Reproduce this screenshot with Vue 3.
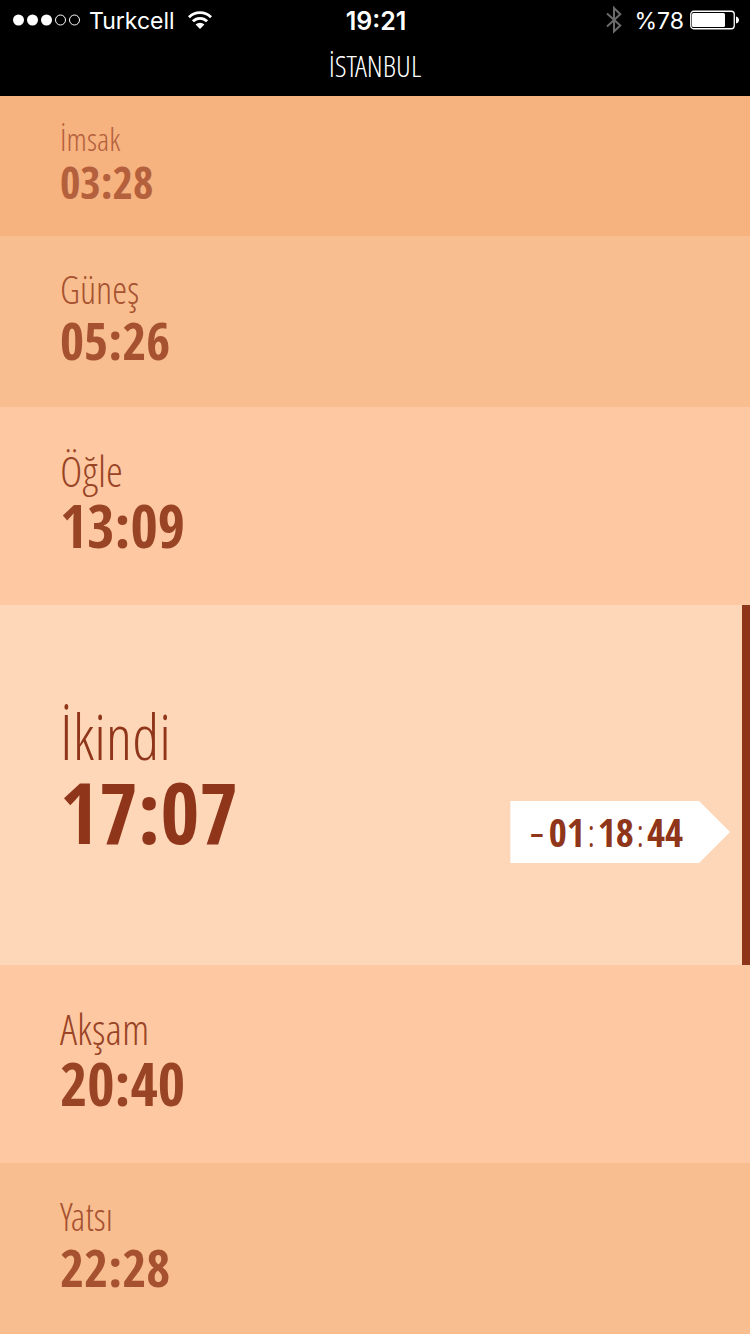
<script setup>
const prayers = [
  { name: 'İmsak', time: '03:28', tier: 'far' },
  { name: 'Güneş', time: '05:26', tier: 'mid' },
  { name: 'Öğle', time: '13:09', tier: 'near' },
  { name: 'İkindi', time: '17:07', tier: 'current', remaining: ['01', '18', '44'] },
  { name: 'Akşam', time: '20:40', tier: 'near' },
  { name: 'Yatsı', time: '22:28', tier: 'mid' },
]
</script>

<template>
  <div class="screen">
    <header class="top">
      <div class="status">
        <div class="side">
          <svg class="signal" width="68" height="12" viewBox="0 0 68 12" aria-hidden="true">
            <g fill="#fff">
              <circle cx="5.5" cy="6" r="5.5" />
              <circle cx="19.5" cy="6" r="5.5" />
              <circle cx="33.5" cy="6" r="5.5" />
            </g>
            <g fill="none" stroke="#fff">
              <circle cx="47.5" cy="6" r="5" />
              <circle cx="61.5" cy="6" r="5" />
            </g>
          </svg>
          <span class="carrier">Turkcell</span>
          <svg width="24" height="18" viewBox="0 0 24 18" aria-hidden="true">
            <g fill="none" stroke="#fff" stroke-width="2.8">
              <path d="M1 6.2a15.6 15.6 0 0 1 22 0" />
              <path d="M4.9 10.3a10 10 0 0 1 14.2 0" />
            </g>
            <path d="M12 18 7.6 13.6a6.2 6.2 0 0 1 8.8 0Z" fill="#fff" />
          </svg>
        </div>
        <time class="clock">19:21</time>
        <div class="side right">
          <svg width="16" height="28" viewBox="0 0 16 28" aria-hidden="true">
            <path d="M1 7.5 14.3 19.5 8 25.5V2l6.3 6.2L1 20.5" fill="none" stroke="#6b6b6b" stroke-width="2" />
          </svg>
          <span class="percent">%78</span>
          <svg width="49" height="20" viewBox="0 0 49 20" aria-hidden="true">
            <rect x=".75" y="1.25" width="43.5" height="17.5" rx="3" fill="none" stroke="#fff" stroke-width="1.3" />
            <rect x="2" y="3" width="33" height="14" rx="1.5" fill="#fff" />
            <path d="M46 6.5c4 1 4 6 0 7Z" fill="#fff" />
          </svg>
        </div>
      </div>
      <h1>İSTANBUL</h1>
    </header>

    <main>
      <section v-for="p in prayers" :key="p.name" :class="['prayer', p.tier]">
        <div class="entry">
          <h2>{{ p.name }}</h2>
          <time class="at">{{ p.time }}</time>
        </div>
        <div v-if="p.remaining" class="countdown">
          <span class="minus">–</span>
          <template v-for="(part, i) in p.remaining" :key="i"><span v-if="i" class="colon">:</span><b>{{ part }}</b></template>
        </div>
      </section>
    </main>
  </div>
</template>

<style>
body {
  margin: 0;
  background: #000;
}
</style>

<style scoped>
.screen {
  display: flex;
  flex-direction: column;
  min-height: 100vh;
  font-family: "Open Sans Condensed", "Liberation Sans Narrow", "Liberation Sans", sans-serif;
}
.top {
  height: 96px;
  background: #000;
  color: #fff;
}
.status {
  display: flex;
  align-items: center;
  height: 40px;
  padding: 0 11px 0 13px;
  font: 23px/40px Inter, "Liberation Sans", sans-serif;
}
.side {
  display: flex;
  flex: 1 0 0;
  align-items: center;
}
.signal {
  margin-right: 8px;
}
.carrier,
.clock,
.percent {
  padding-top: 2px;
}
.carrier {
  margin-right: 13px;
}
.clock {
  font-size: 25px;
  font-weight: 600;
}
.right {
  justify-content: flex-end;
}
.percent {
  margin: 0 6px 0 12px;
}
h1,
h2,
.colon {
  font-family: "Open Sans Condensed Light", "Open Sans Condensed", "Liberation Sans Narrow", sans-serif;
  font-weight: 300;
}
h1 {
  margin: 0;
  font-size: 30px;
  line-height: 52px;
  text-align: center;
}
main {
  display: flex;
  flex: 1;
  flex-direction: column;
}
.prayer {
  display: flex;
  align-items: center;
  justify-content: space-between;
  padding-left: 60px;
}
.entry {
  padding-bottom: 2px;
}
h2 {
  margin: 0;
}
.at {
  display: block;
  font-weight: 700;
}
.far {
  flex: 140 0 0;
  background: #f6b27f;
  color: #b4603c;
}
.far h2 {
  font-size: 32px;
  line-height: 34px;
}
.far .at {
  font-size: 44px;
  line-height: 52px;
}
.mid {
  flex: 171 0 0;
  background: #f9be90;
  color: #a65231;
}
.mid h2 {
  font-size: 38px;
  line-height: 38px;
}
.mid .at {
  font-size: 52px;
  line-height: 64px;
}
.near {
  flex: 198 0 0;
  background: #fec9a2;
  color: #9a4426;
}
.near h2 {
  font-size: 43px;
  line-height: 40px;
}
.near .at {
  font-size: 59px;
  line-height: 68px;
}
.current {
  flex: 360 0 0;
  box-sizing: border-box;
  padding-right: 12px;
  border-right: 8px solid #8f351a;
  background: #fed6b8;
  color: #8f351a;
}
.current h2 {
  font-size: 62px;
  line-height: 56px;
}
.current .at {
  font-size: 84px;
  line-height: 96px;
}
.countdown {
  display: flex;
  margin-top: 94px;
  padding: 0 47px 0 20px;
  background: #fff;
  clip-path: polygon(0 0, calc(100% - 31px) 0, 100% 50%, calc(100% - 31px) 100%, 0 100%);
  font-size: 39px;
  line-height: 62px;
}
.colon {
  width: 13px;
  text-align: center;
}
.minus {
  margin-right: 5px;
  font-size: 28px;
}
</style>
